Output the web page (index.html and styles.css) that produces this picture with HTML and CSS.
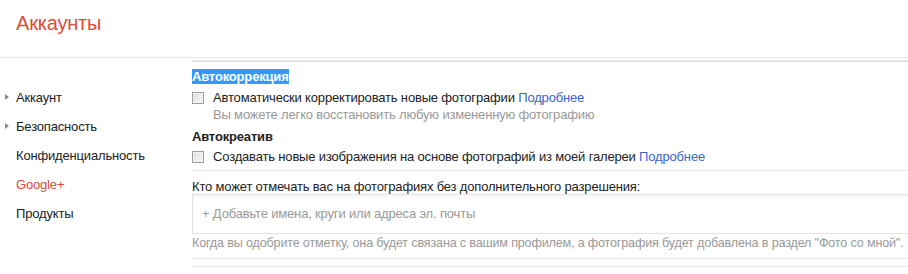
FILE: index.html
```html
<!DOCTYPE html>
<html lang="ru">
<head>
<meta charset="utf-8">
<title>Аккаунты</title>
<link rel="stylesheet" href="styles.css">
</head>
<body>
<div class="page">
  <header class="header">
    <h1 class="title">Аккаунты</h1>
  </header>
  <div class="body">
    <nav class="nav">
      <a class="nav-item has-arrow">Аккаунт</a>
      <a class="nav-item has-arrow">Безопасность</a>
      <a class="nav-item">Конфиденциальность</a>
      <a class="nav-item active">Google+</a>
      <a class="nav-item">Продукты</a>
    </nav>
    <main class="main">
      <section class="section">
        <div class="heading"><span class="selected">Автокоррекция</span></div>
        <label class="check-row"><span class="checkbox"></span><span>Автоматически корректировать новые фотографии <a class="link">Подробнее</a></span></label>
        <div class="hint">Вы можете легко восстановить любую измененную фотографию</div>
        <div class="heading heading-2">Автокреатив</div>
        <label class="check-row row-2"><span class="checkbox"></span><span>Создавать новые изображения на основе фотографий из моей галереи <a class="link">Подробнее</a></span></label>
      </section>
      <section class="section tags">
        <div class="label">Кто может отмечать вас на фотографиях без дополнительного разрешения:</div>
        <div class="input">+ Добавьте имена, круги или адреса эл. почты</div>
        <div class="caption">Когда вы одобрите отметку, она будет связана с вашим профилем, а фотография будет добавлена в раздел "Фото со мной".</div>
      </section>
      <div class="next"></div>
    </main>
  </div>
</div>
</body>
</html>
```

FILE: styles.css
```css
html, body {
  margin: 0;
  padding: 0;
  background: #fff;
}
body {
  font-family: "Liberation Sans", Arial, sans-serif;
  font-size: 13px;
  line-height: 15px;
  color: #222;
  letter-spacing: -0.17px;
}
.page {
  overflow: hidden;
  width: 908px;
  height: 274px;
}
.header {
  height: 57px;
  border-bottom: 1px solid #e5e5e5;
  box-sizing: content-box;
}
.title {
  margin: 0;
  padding: 11px 0 0 16px;
  font-size: 20px;
  line-height: 24px;
  font-weight: normal;
  color: #dd4b39;
  letter-spacing: -0.2px;
}
.body {
  display: flex;
  padding-top: 3px;
}
.nav {
  width: 192px;
  flex: none;
  display: flex;
  flex-direction: column;
  padding-top: 29px;
}
.nav-item {
  position: relative;
  display: block;
  padding: 0 0 0 16px;
  height: 29px;
  line-height: 15px;
  color: #222;
}
.nav-item.active {
  color: #dd4b39;
}
.has-arrow::before {
  content: "";
  position: absolute;
  left: 5px;
  top: 4px;
  border-left: 4px solid #8a8a8a;
  border-top: 3.5px solid transparent;
  border-bottom: 3.5px solid transparent;
}
.main {
  flex: 1;
  margin-right: -30px;
  border-top: 1px solid #dcdcdc;
  box-shadow: 0 -1px 0 #ebebeb;
}
.section {
  border-bottom: 1px solid #e5e5e5;
}
.section:first-child {
  padding-top: 7px;
  padding-bottom: 6px;
}
.heading {
  font-weight: bold;
  line-height: 15px;
  color: #222;
}
.selected {
  background: #3399ff;
  color: #fff;
}
.heading-2 {
  margin-top: 7px;
}
.check-row {
  display: flex;
  align-items: center;
  gap: 9px;
  margin-top: 6px;
  color: #222;
}
.row-2 {
  margin-top: 5px;
}
.checkbox {
  width: 10px;
  height: 10px;
  flex: none;
  border: 1px solid #9c9c9c;
  background: linear-gradient(135deg, #dcdcdc, #f8f8f8);
  box-shadow: inset 0 0 0 1px #f3f3f3;
}
.link {
  color: #3b63d3;
}
.hint {
  padding-left: 21px;
  margin-top: 2px;
  color: #999;
}
.tags {
  padding-top: 8px;
  padding-bottom: 7px;
}
.label {
  color: #222;
}
.input {
  height: 38px;
  line-height: 38px;
  border: 1px solid #e3e3e3;
  box-shadow: inset 0 2px 3px rgba(0,0,0,0.04);
  padding-left: 9px;
  color: #999;
}
.caption {
  margin-top: 2px;
  color: #999;
  white-space: nowrap;
  font-size: 12.6px;
  letter-spacing: -0.17px;
}
.next {
  margin-top: 7px;
  border-top: 1px solid #e5e5e5;
  height: 10px;
}
```
